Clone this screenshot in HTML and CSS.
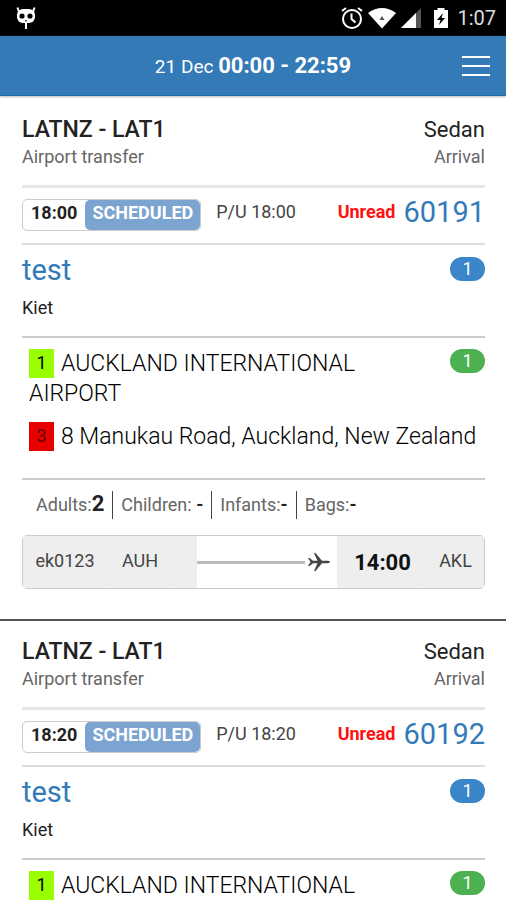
FILE: index.html
```html
<!DOCTYPE html>
<html lang="en">
<head>
<meta charset="utf-8">
<meta name="viewport" content="width=device-width, initial-scale=1">
<title>Jobs</title>
<link rel="stylesheet" href="styles.css">
</head>
<body>
<div class="statusbar">
  <svg class="mascot" width="20" height="24" viewBox="0 0 20 24" aria-hidden="true">
    <path d="M3 6 1.500 1.500M17 6 18.500 1.500M10 15v8" fill="none" stroke="#fff" stroke-width="2"/>
    <rect x="1" y="3" width="18" height="14" rx="6" fill="#fff"/>
    <circle cx="6" cy="10" r="2.600"/><circle cx="14" cy="10" r="2.600"/><path d="M9.300 14h1.400v1.500H9.300z"/>
  </svg>
  <div class="indicators">
    <svg width="22" height="22" viewBox="0 0 22 22" fill="none" stroke="#fff" stroke-width="2" aria-hidden="true">
      <circle cx="11" cy="12" r="9"/><path d="M10.500 6.500V12l4 3.500M1 4l4-3M21 4l-4-3"/>
    </svg>
    <svg width="28" height="22" viewBox="0 0 28 22" aria-hidden="true">
      <path d="M0 6Q14-4 28 6L14 21.500z" fill="#fff"/><path d="m14 9 2.500 4h-5z" fill="#555"/>
    </svg>
    <svg width="22" height="22" viewBox="0 0 22 22" aria-hidden="true">
      <path d="M0 21 20 1v20z" fill="#555"/><path d="M0 21 15 6v15z" fill="#fff"/>
    </svg>
    <svg class="battery" width="14" height="22" viewBox="0 0 14 22" aria-hidden="true">
      <path d="M3.500 1h7v2H14v18H0V3h3.500z" fill="#fff"/><path d="m9 6-6 7h3.500L5 18l6-7H7.500z"/>
    </svg>
    <span class="clock">1:07</span>
  </div>
</div>
<header class="topbar">
  <h1 class="range">21 Dec <strong>00:00 - 22:59</strong></h1>
  <button class="menu" type="button" aria-label="Menu"><i></i><i></i><i></i></button>
</header>
<main class="jobs">
  <article class="job">
    <div class="summary">
      <div class="line"><strong>LATNZ - LAT1</strong><span>Sedan</span></div>
      <div class="line minor"><span>Airport transfer</span><span>Arrival</span></div>
    </div>
    <div class="state">
      <div class="status"><span class="time">18:00</span><button type="button" class="stage">SCHEDULED</button></div>
      <span class="pickup">P/U 18:00</span>
      <span class="unread">Unread</span>
      <a class="number" href="#60191">60191</a>
    </div>
    <div class="client">
      <div class="who"><a href="#test">test</a><span>Kiet</span></div>
      <span class="pill blue">1</span>
    </div>
    <ul class="stops">
      <li><div class="place"><b class="tag start">1</b>AUCKLAND INTERNATIONAL AIRPORT</div><span class="pill green">1</span></li>
      <li><div class="place"><b class="tag finish">3</b>8 Manukau Road, Auckland, New Zealand</div></li>
    </ul>
    <ul class="counts">
      <li>Adults:<b class="count">2</b></li>
      <li>Children: <b>-</b></li>
      <li>Infants:<b>-</b></li>
      <li>Bags:<b>-</b></li>
    </ul>
    <div class="flight">
      <span class="cell code">ek0123</span><span class="cell from">AUH</span><span class="cell blank"></span>
      <span class="route"><svg width="23" height="22" viewBox="0 0 23 22" aria-hidden="true"><path d="M23 11c0-1-2-1.200-4-1.200h-4L8.500 2H7l3.500 7.800H6L2.500 7H1l2.500 4L1 15h1.500L6 12.200h4.500L7 20h1.500l6.500-7.800h4c2 0 4-.2 4-1.200z" fill="#444"/></svg></span>
      <strong class="cell arrive">14:00</strong><span class="cell to">AKL</span>
    </div>
  </article>
  <article class="job">
    <div class="summary">
      <div class="line"><strong>LATNZ - LAT1</strong><span>Sedan</span></div>
      <div class="line minor"><span>Airport transfer</span><span>Arrival</span></div>
    </div>
    <div class="state">
      <div class="status"><span class="time">18:20</span><button type="button" class="stage">SCHEDULED</button></div>
      <span class="pickup">P/U 18:20</span>
      <span class="unread">Unread</span>
      <a class="number" href="#60192">60192</a>
    </div>
    <div class="client">
      <div class="who"><a href="#test">test</a><span>Kiet</span></div>
      <span class="pill blue">1</span>
    </div>
    <ul class="stops">
      <li><div class="place"><b class="tag start">1</b>AUCKLAND INTERNATIONAL</div><span class="pill green">1</span></li>
    </ul>
  </article>
</main>
</body>
</html>
```
FILE: styles.css
```css
* { box-sizing: border-box; }
body {
  margin: 0;
  height: 100vh;
  display: flex;
  flex-direction: column;
  overflow: hidden;
  background: #fff;
  color: #222;
  font-family: Roboto, "Liberation Sans", sans-serif;
  font-size: 18px;
}
ul { margin: 0; padding: 0; list-style: none; }
a { color: #337ab7; text-decoration: none; }
button { font: inherit; border: 0; cursor: pointer; }

.statusbar {
  flex: none;
  height: 36px;
  padding: 0 10px 0 16px;
  display: flex;
  align-items: center;
  justify-content: space-between;
  background: #000;
}
.indicators { display: flex; align-items: center; gap: 5px; }
.battery { margin-left: 6px; }
.clock { margin-left: 4px; color: #ddd; font-size: 20px; }

.topbar {
  flex: none;
  height: 60px;
  padding: 0 16px;
  display: grid;
  grid-template-columns: 28px 1fr 28px;
  align-items: center;
  background: #337ab7;
  border-bottom: 1px solid #166fa5;
  box-shadow: 0 1px 2px #bbb;
}
.range {
  grid-column: 2;
  margin: 0;
  color: #fff;
  font-size: 19px;
  font-weight: 400;
  text-align: center;
}
.range strong { font-size: 22px; }
.menu {
  width: 28px;
  padding: 0;
  display: grid;
  gap: 7px;
  background: none;
}
.menu i { height: 2px; background: #fff; }

.jobs { flex: 1; min-height: 0; padding-top: 3px; overflow: auto; scrollbar-width: none; }
.job { padding: 18px 21px 30px 22px; border-bottom: 2px solid #555; }

.summary { padding-bottom: 17px; border-bottom: 3px solid #e6e6e6; }
.line { display: flex; justify-content: space-between; font-size: 22px; line-height: 25px; }
.line strong { font-size: 23px; font-weight: 500; }
.minor { color: #666; font-size: 18px; padding-top: 3px; line-height: 23px; }

.state {
  height: 57px;
  padding-top: 7px;
  display: flex;
  align-items: flex-start;
  line-height: 34px;
  border-bottom: 2px solid #ddd;
}
.status {
  height: 32px;
  margin-top: 4px;
  display: flex;
  border: 1px solid #ccc;
  border-radius: 5px;
  line-height: 26px;
  font-weight: 700;
}
.time { padding: 0 8px; }
.stage {
  padding: 0 7px 4px;
  border-radius: 5px;
  background: #7ba4d0;
  color: #fff;
}
.pickup { margin-left: 15px; color: #444; }
.unread { margin-left: auto; color: #f11; font-weight: 700; }
.number { margin-left: 8px; font-size: 29px; }

.client {
  height: 93px;
  padding-top: 8px;
  display: flex;
  align-items: flex-start;
  justify-content: space-between;
  border-bottom: 2px solid #ccc;
}
.who { display: grid; gap: 4px; line-height: 34px; }
.who a { font-size: 29px; }
.pill {
  flex: none;
  width: 35px;
  height: 24px;
  margin-top: 4px;
  border-radius: 12px;
  color: #fff;
  line-height: 23px;
  text-align: center;
}
.blue { background: #3b86c8; }
.green { background: #4db152; }

.stops {
  padding: 11px 0 26px 7px;
  display: grid;
  gap: 13px;
  border-bottom: 2px solid #ccc;
  color: #000;
  font-size: 23px;
  font-weight: 300;
  line-height: 30px;
}
.stops li { display: flex; justify-content: space-between; }
.stops .pill { margin: 0 0 0 20px; font-size: 18px; font-weight: 400; }
.tag {
  float: left;
  width: 25px;
  height: 29px;
  margin-right: 7px;
  font-size: 18px;
  font-weight: 400;
  line-height: 27px;
  text-align: center;
}
.start { background: #9f0; }
.finish { background: #e60000; color: #600; }

.counts { display: flex; padding: 11px 0 16px 14px; color: #666; line-height: 28px; }
.counts li + li { margin-left: 8px; padding-left: 8px; border-left: 1px solid #444; }
.counts b { color: #222; font-weight: 700; }
.counts .count { font-size: 22px; line-height: 20px; }

.flight {
  height: 54px;
  display: flex;
  border: 1px solid #ccc;
  border-radius: 5px;
  color: #444;
  line-height: 50px;
  text-align: center;
}
.cell { background: #eee; border-radius: 2px; }
.code { width: 84px; }
.from { width: 62px; padding-left: 4px; }
.blank { width: 28px; }
.route { flex: 1; display: flex; align-items: center; gap: 2px; padding-right: 7px; }
.route::before { content: ""; flex: 1; height: 3px; background: #bbb; }
.arrive { width: 86px; color: #111; font-size: 22px; line-height: 54px; padding-left: 5px; }
.to { width: 61px; padding-left: 4px; }
```
